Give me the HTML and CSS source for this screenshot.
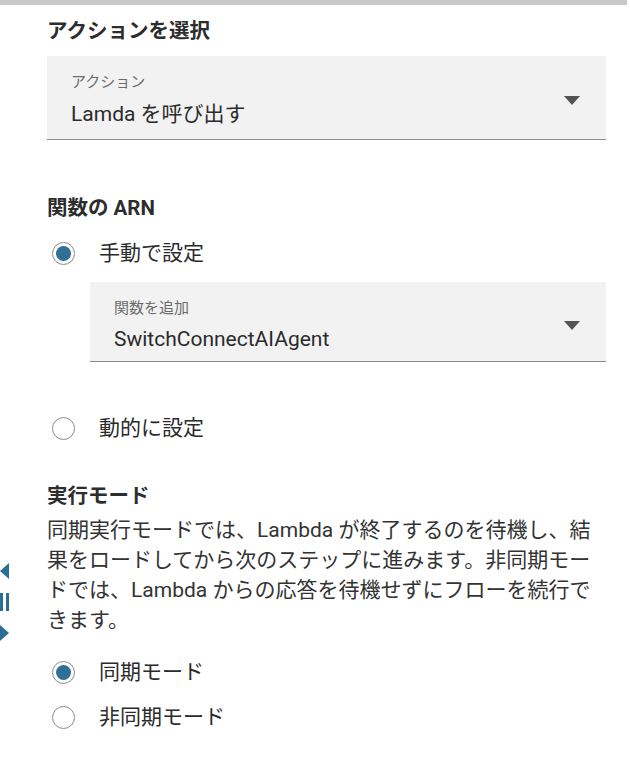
FILE: index.html
```html
<!DOCTYPE html>
<html lang="ja">
<head>
<meta charset="utf-8">
<title>アクションを選択</title>
<link rel="stylesheet" href="styles.css">
</head>
<body>
<div class="topbar"></div>
<div class="splitter" aria-hidden="true">
  <span class="tri-left"></span>
  <span class="bars"><i></i><i></i></span>
  <span class="tri-right"></span>
</div>
<main class="panel">
  <h2 class="heading">アクションを選択</h2>
  <div class="select">
    <div class="select-text">
      <div class="select-label">アクション</div>
      <div class="select-value">Lamda を呼び出す</div>
    </div>
    <span class="caret"></span>
  </div>

  <h2 class="heading heading-arn">関数の ARN</h2>
  <div class="radio-row row-first">
    <span class="radio checked"></span>
    <span class="radio-label">手動で設定</span>
  </div>
  <div class="select select-nested">
    <div class="select-text">
      <div class="select-label">関数を追加</div>
      <div class="select-value">SwitchConnectAIAgent</div>
    </div>
    <span class="caret"></span>
  </div>
  <div class="radio-row row-dynamic">
    <span class="radio"></span>
    <span class="radio-label">動的に設定</span>
  </div>

  <h2 class="heading heading-mode">実行モード</h2>
  <p class="desc">同期実行モードでは、Lambda が終了するのを待機し、結果をロードしてから次のステップに進みます。非同期モードでは、Lambda からの応答を待機せずにフローを続行できます。</p>
  <div class="radio-row row-sync">
    <span class="radio checked"></span>
    <span class="radio-label">同期モード</span>
  </div>
  <div class="radio-row row-async">
    <span class="radio"></span>
    <span class="radio-label">非同期モード</span>
  </div>
</main>
</body>
</html>
```
FILE: styles.css
```css
html, body {
  margin: 0;
  padding: 0;
  background: #ffffff;
}
body {
  font-family: Roboto, "Noto Sans CJK JP", sans-serif;
  color: #333333;
  position: relative;
}
.topbar {
  height: 5px;
  width: 627px;
  background: #c8c8c8;
}
.splitter {
  position: absolute;
  left: 0;
  top: 563px;
  display: flex;
  flex-direction: column;
  align-items: flex-start;
  gap: 14px;
}
.tri-left {
  width: 0;
  height: 0;
  border-top: 8px solid transparent;
  border-bottom: 8px solid transparent;
  border-right: 9px solid #2e6e96;
}
.tri-right {
  width: 0;
  height: 0;
  border-top: 8px solid transparent;
  border-bottom: 8px solid transparent;
  border-left: 9px solid #2e6e96;
}
.bars {
  display: flex;
  gap: 3px;
  height: 18px;
}
.bars i {
  display: block;
  width: 3px;
  height: 18px;
  background: #2e6e96;
}
.panel {
  padding: 12px 24px 0 47px;
}
.heading {
  margin: 0;
  font-size: 20.5px;
  line-height: 28px;
  font-weight: 700;
  color: #2d2d2d;
}
.heading-arn { margin-top: 54px; }
.heading-mode { margin-top: 40px; }
.select {
  margin-top: 11px;
  background: #f2f2f2;
  border-bottom: 1px solid #8c8c8c;
  padding: 16px 26px 11px 24px;
  display: flex;
  align-items: center;
  justify-content: space-between;
}
.select-nested {
  margin-top: 15px;
  margin-left: 43px;
  padding-bottom: 8px;
}
.select-label {
  font-size: 15px;
  line-height: 20px;
  color: #6b6b6b;
}
.select-value {
  margin-top: 8px;
  font-size: 21px;
  line-height: 28px;
  color: #2b2b2b;
}
.select-nested .select-value { margin-top: 7px; }
.caret {
  width: 0;
  height: 0;
  border-left: 8.5px solid transparent;
  border-right: 8.5px solid transparent;
  border-top: 9px solid #545454;
}
.radio-row {
  display: flex;
  align-items: center;
  height: 28px;
}
.row-first { margin-top: 17px; }
.row-dynamic { margin-top: 52px; }
.row-sync { margin-top: 23px; }
.row-async { margin-top: 17px; }
.radio {
  box-sizing: border-box;
  width: 23px;
  height: 23px;
  margin-left: 5px;
  border: 1px solid #8a8a8a;
  border-radius: 50%;
  background: #ffffff;
  display: flex;
  align-items: center;
  justify-content: center;
}
.radio.checked::after {
  content: "";
  width: 15px;
  height: 15px;
  border-radius: 50%;
  background: #2f6f98;
}
.radio-label {
  margin-left: 24px;
  font-size: 21px;
  line-height: 28px;
  color: #2b2b2b;
}
.desc {
  margin: 5px 0 0;
  font-size: 21px;
  line-height: 30px;
  color: #333333;
}
```
